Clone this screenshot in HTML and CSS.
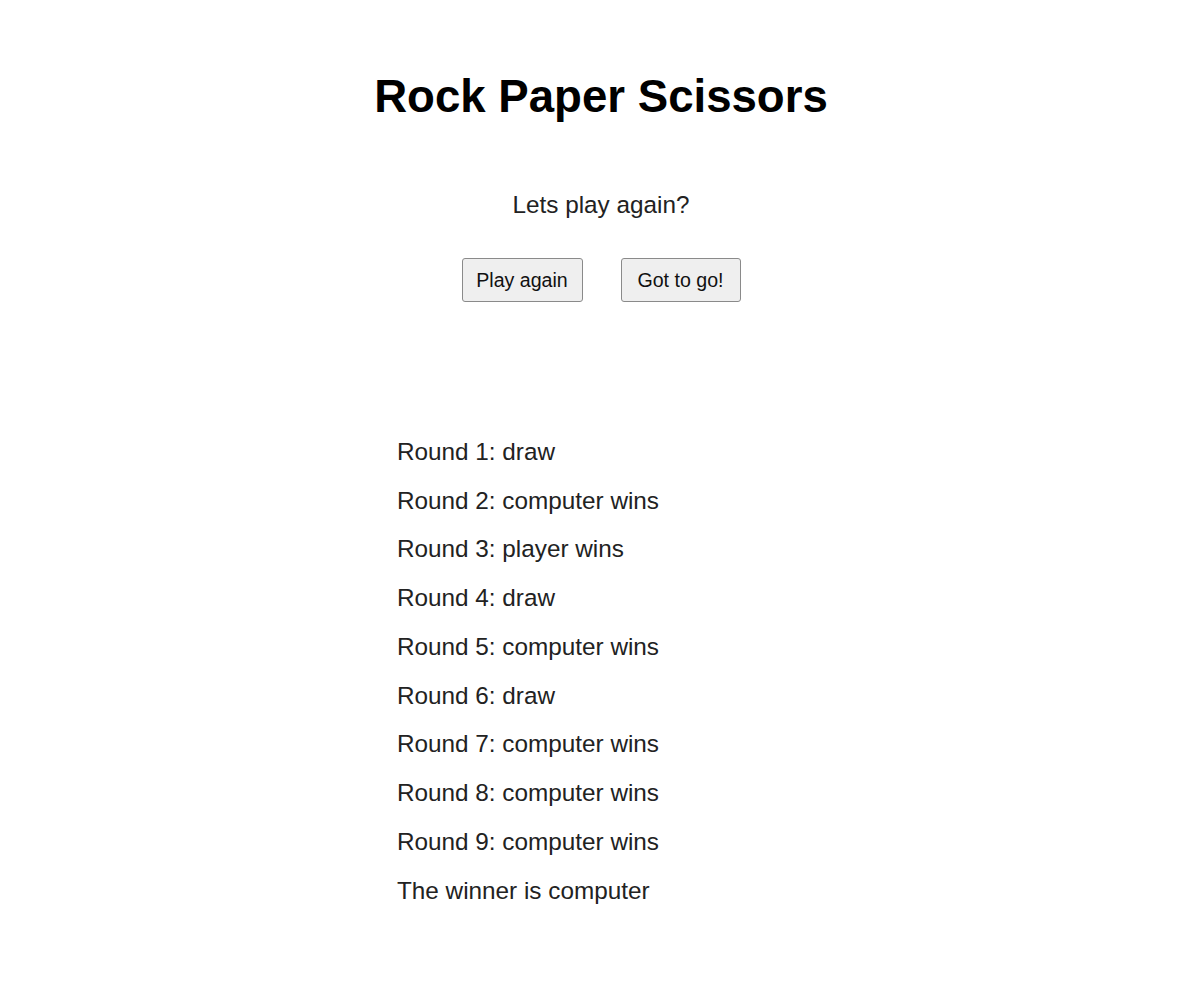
FILE: index.html
```html
<!DOCTYPE html>
<html lang="en">
<head>
<meta charset="utf-8">
<title>Rock Paper Scissors</title>
<link rel="stylesheet" href="styles.css">
</head>
<body>
<main class="page">
  <h1 class="title">Rock Paper Scissors</h1>
  <p class="prompt">Lets play again?</p>
  <div class="actions">
    <button class="btn btn-play" type="button">Play again</button>
    <button class="btn btn-quit" type="button">Got to go!</button>
  </div>
  <ul class="results">
    <li>Round 1: draw</li>
    <li>Round 2: computer wins</li>
    <li>Round 3: player wins</li>
    <li>Round 4: draw</li>
    <li>Round 5: computer wins</li>
    <li>Round 6: draw</li>
    <li>Round 7: computer wins</li>
    <li>Round 8: computer wins</li>
    <li>Round 9: computer wins</li>
    <li>The winner is computer</li>
  </ul>
</main>
</body>
</html>
```

FILE: styles.css
```css
html, body {
  margin: 0;
  padding: 0;
  background: #ffffff;
}

body {
  font-family: "Liberation Sans", Arial, sans-serif;
  color: #222222;
}

.page {
  display: flex;
  flex-direction: column;
  align-items: center;
  padding-top: 71px;
}

.title {
  margin: 0;
  font-size: 45.6px;
  font-weight: bold;
  color: #000000;
  line-height: 52px;
}

.prompt {
  margin: 68px 0 0;
  font-size: 24.3px;
  line-height: 28px;
}

.actions {
  display: flex;
  gap: 38px;
  margin-top: 39px;
}

.btn {
  font-family: "Liberation Sans", Arial, sans-serif;
  font-size: 19.6px;
  color: #111111;
  background: #efefef;
  border: 1px solid #8a8a8a;
  border-radius: 3px;
  height: 44px;
  width: 121px;
  padding: 0;
  line-height: 22px;
}

.btn-quit {
  width: 120px;
}

.results {
  list-style: none;
  margin: 136px 0 0;
  padding: 0;
  align-self: flex-start;
  margin-left: 397px;
  display: flex;
  flex-direction: column;
  gap: 21.15px;
  font-size: 24.3px;
  line-height: 27.6px;
}
```
